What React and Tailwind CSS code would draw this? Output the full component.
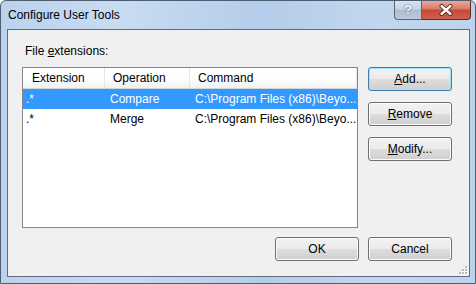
import React from "react";

const rows = [
  { ext: ".*", op: "Compare", cmd: "C:\\Program Files (x86)\\Beyo...", selected: true },
  { ext: ".*", op: "Merge", cmd: "C:\\Program Files (x86)\\Beyo...", selected: false },
];

function Button({ children, primary }) {
  return (
    <button
      className={`w-[84px] h-[24px] rounded-[3px] border text-[12px] leading-none text-black flex items-center justify-center bg-[linear-gradient(#f2f2f2_0%,#ebebeb_48%,#dddddd_52%,#cfcfcf_100%)] ${
        primary
          ? "border-[#3c7fb1] shadow-[inset_0_0_0_1px_#9fe2f9]"
          : "border-[#707070] shadow-[inset_0_0_0_1px_#fbfbfb]"
      }`}
    >
      {children}
    </button>
  );
}

export default function App() {
  return (
    <div className="w-[476px] h-[284px] flex flex-col overflow-hidden rounded-t-[6px] border border-[#4e5d6f] bg-[linear-gradient(90deg,#bad2ed_0%,#c8dcf2_25%,#b4cdea_55%,#c2d7ef_80%,#bcd3ed_100%)] font-['Liberation_Sans',Arial,sans-serif] text-[12px] text-black select-none">
      {/* Title bar */}
      <div className="h-[28px] flex items-start shrink-0">
        <div className="pl-[7px] pt-[7px] leading-[15px] text-black">Configure User Tools</div>
        <div className="ml-auto mr-[4px] flex">
          <div className="w-[28px] h-[19px] border border-[#5a6675] border-t-0 rounded-bl-[4px] bg-[linear-gradient(#d6e3f1_0%,#c5d5e6_45%,#aebdcf_50%,#bccbdc_100%)] flex items-center justify-center text-[13px] font-bold text-[#f8f8f8] [text-shadow:0_0_2px_#3a4656]">
            ?
          </div>
          <div className="w-[49px] h-[19px] border border-[#5a2a24] border-t-0 border-l-0 rounded-br-[4px] bg-[linear-gradient(#e9a99a_0%,#d87a66_45%,#c44a35_50%,#d0604a_100%)] flex items-center justify-center">
            <svg width="14" height="12" viewBox="0 0 14 12">
              <path d="M2.5 2 L11.5 10 M11.5 2 L2.5 10" stroke="#3a1a14" strokeWidth="4" strokeLinecap="round" />
              <path d="M2.5 2 L11.5 10 M11.5 2 L2.5 10" stroke="#ffffff" strokeWidth="2.4" strokeLinecap="round" />
            </svg>
          </div>
        </div>
      </div>

      {/* Frame + content */}
      <div className="flex-1 pl-[6px] pr-[5px] pb-[6px] flex">
        <div className="flex-1 relative border border-[#5d6d80] bg-[#f0f0f0] flex flex-col pl-[14px] pt-[14px]">
          <div className="pl-[3px] leading-[15px] h-[15px]">
            File <u>e</u>xtensions:
          </div>

          <div className="mt-[8px] flex">
            {/* List view */}
            <div className="w-[336px] h-[161px] border border-[#828790] bg-white flex flex-col">
              <div className="h-[21px] flex border-b border-[#d5d5d5] bg-[linear-gradient(#ffffff_0%,#ffffff_50%,#f1f2f4_100%)]">
                <div className="w-[82px] border-r border-[#e3e5e8] pl-[9px] flex items-center">Extension</div>
                <div className="w-[85px] border-r border-[#e3e5e8] pl-[8px] flex items-center">Operation</div>
                <div className="flex-1 border-r border-[#e3e5e8] pl-[8px] flex items-center">Command</div>
              </div>
              {rows.map((r, i) => (
                <div
                  key={i}
                  className={`h-[20px] flex items-center ${r.selected ? "bg-[#3399ff] text-white" : "text-black"}`}
                >
                  <div className="w-[82px] pl-[3px]">{r.ext}</div>
                  <div className="w-[85px] pl-[5px]">{r.op}</div>
                  <div className="flex-1 pl-[5px] whitespace-nowrap">{r.cmd}</div>
                </div>
              ))}
            </div>

            {/* Side buttons */}
            <div className="ml-[10px] flex flex-col gap-[11px]">
              <Button primary>
                <span><u>A</u>dd...</span>
              </Button>
              <Button>
                <span><u>R</u>emove</span>
              </Button>
              <Button>
                <span><u>M</u>odify...</span>
              </Button>
            </div>
          </div>

          <div className="w-[430px] mt-[9px] flex justify-end gap-[9px]">
            <Button>OK</Button>
            <Button>Cancel</Button>
          </div>

          {/* size grip */}
          <svg className="absolute right-[1px] bottom-[1px]" width="11" height="11" viewBox="0 0 11 11">
            {[[8, 2], [5, 5], [8, 5], [2, 8], [5, 8], [8, 8]].map(([x, y], i) => (
              <g key={i}>
                <rect x={x + 1} y={y + 1} width="2" height="2" fill="#ffffff" />
                <rect x={x} y={y} width="2" height="2" fill="#b8bcc2" />
              </g>
            ))}
          </svg>
        </div>
      </div>
    </div>
  );
}
